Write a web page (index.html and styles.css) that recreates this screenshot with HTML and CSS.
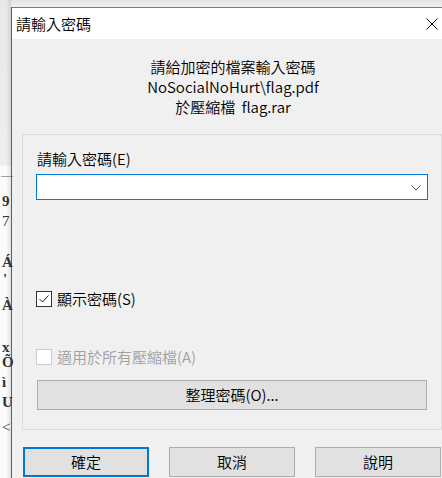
FILE: index.html
```html
<!DOCTYPE html>
<html lang="zh-Hant">
<head>
<meta charset="utf-8">
<title>請輸入密碼</title>
<link rel="stylesheet" href="styles.css">
</head>
<body>
<div class="screen">
  <div class="backdrop">
    <span class="bg-glyph g1">—</span>
    <span class="bg-glyph g2">9</span>
    <span class="bg-glyph g3">7</span>
    <span class="bg-glyph g4">Á</span>
    <span class="bg-glyph g5">'</span>
    <span class="bg-glyph g6">À</span>
    <span class="bg-glyph g7">x</span>
    <span class="bg-glyph g8">Õ</span>
    <span class="bg-glyph g9">ì</span>
    <span class="bg-glyph g10">U</span>
    <span class="bg-glyph g11">&lt;</span>
  </div>
  <div class="dialog">
    <div class="titlebar">
      <span class="title">請輸入密碼</span>
      <span class="close">
        <svg width="12" height="12" viewBox="0 0 12 12"><path d="M0.5 0.5 L11.5 11.5 M11.5 0.5 L0.5 11.5" stroke="#000" stroke-width="1" fill="none"/></svg>
      </span>
    </div>
    <div class="body">
      <div class="message">
        <div>請給加密的檔案輸入密碼</div>
        <div>NoSocialNoHurt\flag.pdf</div>
        <div class="spaced">於壓縮檔 flag.rar</div>
      </div>
      <div class="group">
        <div class="label">請輸入密碼(E)</div>
        <div class="combo">
          <svg class="chev" width="10" height="6" viewBox="0 0 10 6"><path d="M0.5 0.5 L5 5 L9.5 0.5" stroke="#555" stroke-width="1" fill="none"/></svg>
        </div>
        <div class="check-row show">
          <span class="box checked">
            <svg width="14" height="14" viewBox="0 0 14 14"><path d="M2.5 7 L5.5 10 L11.5 3.5" stroke="#222" stroke-width="1" fill="none"/></svg>
          </span>
          <span class="check-text">顯示密碼(S)</span>
        </div>
        <div class="check-row all disabled">
          <span class="box"></span>
          <span class="check-text">適用於所有壓縮檔(A)</span>
        </div>
        <div class="btn wide">整理密碼(O)...</div>
      </div>
      <div class="buttons">
        <div class="btn default">確定</div>
        <div class="btn">取消</div>
        <div class="btn">說明</div>
      </div>
    </div>
  </div>
</div>
</body>
</html>
```

FILE: styles.css
```css
html, body {
  margin: 0;
  padding: 0;
}
body {
  font-family: "Noto Sans CJK TC", "Noto Sans", sans-serif;
  font-size: 15px;
  font-weight: 350;
  color: #000;
}
.screen {
  position: relative;
  width: 442px;
  height: 478px;
  overflow: hidden;
  box-sizing: border-box;
  padding: 7px 0 0 11px;
  background: linear-gradient(to bottom, #e4e4e4 0, #f0f0f0 7px, #f4f4f4 100%);
}
.backdrop {
  position: absolute;
  left: 0;
  top: 0;
  width: 11px;
  height: 478px;
  background:
    linear-gradient(to right, rgba(0,0,0,0) 0, rgba(0,0,0,0) 6px, rgba(0,0,0,0.10) 11px),
    linear-gradient(to bottom, #e9e9e9 0, #eeeeee 165px, #fbfbfb 166px, #fbfbfb 100%);
}
.bg-glyph {
  position: absolute;
  left: 2px;
  font-family: "Liberation Serif", serif;
  font-weight: bold;
  font-size: 15px;
  line-height: 12px;
  color: #333;
}
.g1 { top: 169px; left: 1px; font-weight: normal; font-size: 12px; color: #555; }
.g2 { top: 195px; }
.g3 { top: 215px; font-weight: normal; }
.g4 { top: 256px; }
.g5 { top: 273px; left: 3px; }
.g6 { top: 299px; }
.g7 { top: 341px; }
.g8 { top: 356px; }
.g9 { top: 376px; }
.g10 { top: 396px; }
.g11 { top: 421px; font-weight: normal; }

.dialog {
  width: 441px;
  height: 480px;
  border-left: 1px solid #5e5e5e;
  border-top: 1px solid #7a7a7a;
  background: #f0f0f0;
  display: flex;
  flex-direction: column;
}
.titlebar {
  height: 31px;
  background: #fff;
  display: flex;
  align-items: center;
  justify-content: space-between;
  padding: 0 3px 0 4px;
  flex: none;
}
.title {
  line-height: 20px;
  padding-top: 1px;
}
.close {
  display: flex;
  width: 12px;
  height: 12px;
  margin-right: 12px;
}
.body {
  padding-top: 18px;
  display: flex;
  flex-direction: column;
}
.message {
  text-align: center;
  line-height: 20px;
  padding-left: 1px;
}
.spaced {
  word-spacing: 3px;
}
.group {
  margin: 17px 11px 0 10px;
  border: 1px solid #dcdcdc;
  padding: 14px 13px 19px 13px;
  display: flex;
  flex-direction: column;
}
.label {
  line-height: 20px;
  padding-left: 1px;
}
.combo {
  margin-top: 5px;
  height: 26px;
  box-sizing: border-box;
  border: 1px solid #0078d7;
  background: #fff;
  display: flex;
  align-items: center;
  justify-content: flex-end;
  padding-right: 6px;
}
.chev {
  display: block;
  margin-top: 1px;
}
.check-row {
  display: flex;
  align-items: center;
  height: 20px;
  line-height: 20px;
  gap: 5px;
}
.check-row.show {
  margin-top: 89px;
}
.check-row.all {
  margin-top: 38px;
}
.box {
  width: 16px;
  height: 16px;
  box-sizing: border-box;
  border: 1px solid #333;
  background: #fff;
  display: flex;
  align-items: center;
  justify-content: center;
  flex: none;
}
.disabled .box {
  border-color: #cccccc;
}
.disabled .check-text {
  color: #a0a0a0;
}
.btn {
  height: 30px;
  box-sizing: border-box;
  border: 1px solid #adadad;
  background: #e1e1e1;
  display: flex;
  align-items: center;
  justify-content: center;
  line-height: 20px;
}
.btn.wide {
  margin-top: 13px;
  margin-left: 1px;
  margin-right: 1px;
}
.buttons {
  margin-top: 17px;
  padding-left: 11px;
  display: flex;
  gap: 20px;
}
.buttons .btn {
  width: 126px;
  flex: none;
}
.btn.default {
  border: 2px solid #0078d7;
}
```
